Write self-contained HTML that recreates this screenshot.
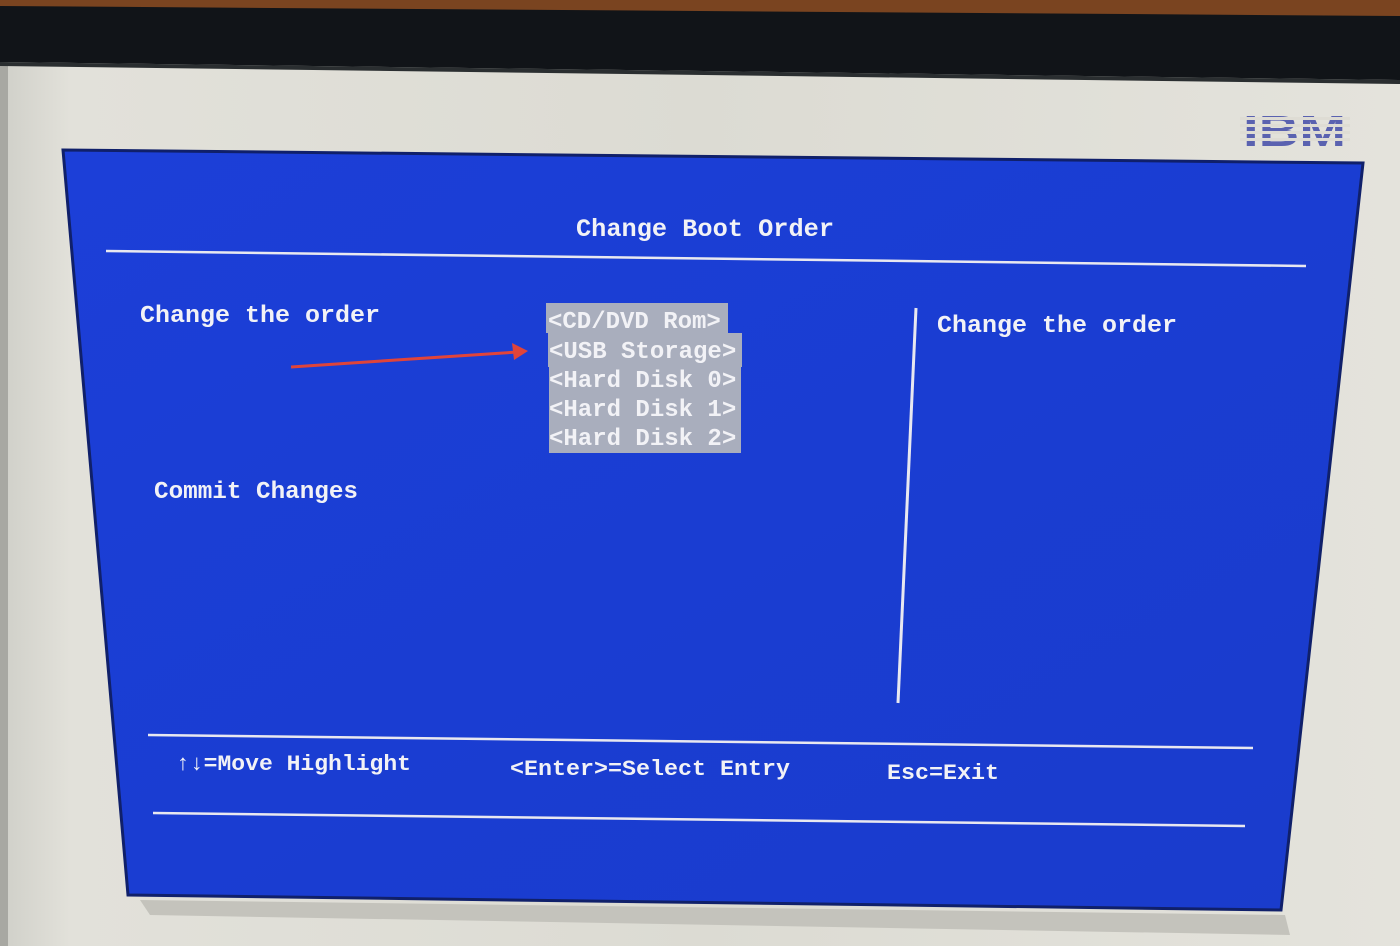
<!DOCTYPE html>
<html><head><style>
html,body{margin:0;padding:0;width:1400px;height:946px;overflow:hidden;background:#dedcd4}
svg{display:block}
text{font-family:"Liberation Mono",monospace;font-weight:bold;fill:#f2f2f6}
</style></head><body>
<svg width="1400" height="946" viewBox="0 0 1400 946">
<defs>
<linearGradient id="scr" x1="0" y1="0" x2="1" y2="0">
<stop offset="0" stop-color="#cfcfc8"/><stop offset="0.05" stop-color="#e2e1da"/><stop offset="0.5" stop-color="#dcdbd3"/><stop offset="1" stop-color="#e4e3dc"/>
</linearGradient>
<linearGradient id="bl" x1="0" y1="0" x2="1" y2="1">
<stop offset="0" stop-color="#1c3fd8"/><stop offset="0.5" stop-color="#1a3dd2"/><stop offset="1" stop-color="#1a3ccc"/>
</linearGradient>
</defs>
<rect width="1400" height="946" fill="url(#scr)"/>
<rect x="0" y="0" width="8" height="946" fill="#a8a8a2"/>
<polygon points="0,0 1400,0 1400,80 0,62" fill="#111418"/>
<polygon points="0,0 1400,0 1400,16 0,6" fill="#7a4420"/>
<polygon points="0,62 1400,80 1400,84 0,66" fill="#2a2e30"/>
<!-- IBM logo -->
<text x="1243" y="146" textLength="103" lengthAdjust="spacingAndGlyphs" style="font-family:'Liberation Sans',sans-serif;font-size:44px;font-weight:900;fill:#5a62b0">IBM</text>
<g fill="#dedcd4">
<rect x="1240" y="117" width="110" height="3"/><rect x="1240" y="124" width="110" height="3"/><rect x="1240" y="131" width="110" height="3"/><rect x="1240" y="138" width="110" height="3"/>
</g>
<!-- shadow -->
<polygon points="140,900 1285,915 1290,935 150,915" fill="#c4c3bc"/>
<!-- blue panel -->
<polygon points="63,150 1363,163 1281,910 128,895" fill="url(#bl)" stroke="#10206a" stroke-width="3"/>
<!-- lines -->
<polyline points="106,251 1306,266" stroke="#e8e8f0" stroke-width="2.5" fill="none"/>
<polyline points="148,735 1253,748" stroke="#e8e8f0" stroke-width="2.5" fill="none"/>
<polyline points="153,813 1245,826" stroke="#e8e8f0" stroke-width="2.5" fill="none"/>
<polyline points="916,308 898,703" stroke="#e8e8f0" stroke-width="3" fill="none"/>
<text x="576" y="236" font-size="25" textLength="258" lengthAdjust="spacingAndGlyphs">Change Boot Order</text>
<text x="140" y="322" font-size="24" textLength="240" lengthAdjust="spacingAndGlyphs">Change the order</text>
<text x="937" y="332" font-size="24" textLength="240" lengthAdjust="spacingAndGlyphs">Change the order</text>
<text x="154" y="498" font-size="24" textLength="204" lengthAdjust="spacingAndGlyphs">Commit Changes</text>
<!-- highlighted list -->
<rect x="546" y="303" width="182" height="30" fill="#a9aebd"/>
<rect x="548" y="333" width="194" height="34" fill="#a9aebd"/>
<rect x="549" y="367" width="192" height="86" fill="#a9aebd"/>
<g style="font-size:24px">
<text x="548" y="328">&lt;CD/DVD Rom&gt;</text>
<text x="549" y="358">&lt;USB Storage&gt;</text>
<text x="549" y="387">&lt;Hard Disk 0&gt;</text>
<text x="549" y="416">&lt;Hard Disk 1&gt;</text>
<text x="549" y="445">&lt;Hard Disk 2&gt;</text>
</g>
<!-- red arrow -->
<line x1="291" y1="367" x2="518" y2="352" stroke="#e0443a" stroke-width="3"/>
<polygon points="528,351 512,343 514,360" fill="#e0443a"/>
<text x="176" y="770" font-size="22" textLength="235" lengthAdjust="spacingAndGlyphs">↑↓=Move Highlight</text>
<text x="510" y="775" font-size="22" textLength="280" lengthAdjust="spacingAndGlyphs">&lt;Enter&gt;=Select Entry</text>
<text x="887" y="779" font-size="22" textLength="112" lengthAdjust="spacingAndGlyphs">Esc=Exit</text>
</svg>
</body></html>
